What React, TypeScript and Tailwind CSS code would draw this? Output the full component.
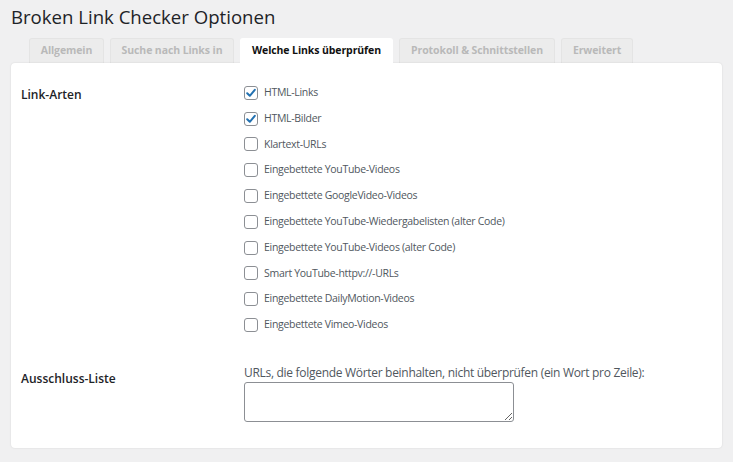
import React from "react";

const items: [string, boolean][] = [
  ["HTML-Links", true],
  ["HTML-Bilder", true],
  ["Klartext-URLs", false],
  ["Eingebettete YouTube-Videos", false],
  ["Eingebettete GoogleVideo-Videos", false],
  ["Eingebettete YouTube-Wiedergabelisten (alter Code)", false],
  ["Eingebettete YouTube-Videos (alter Code)", false],
  ["Smart YouTube-httpv://-URLs", false],
  ["Eingebettete DailyMotion-Videos", false],
  ["Eingebettete Vimeo-Videos", false],
];

const tabs: [string, number, boolean][] = [
  ["Allgemein", 75, false],
  ["Suche nach Links in", 124, false],
  ["Welche Links überprüfen", 153, true],
  ["Protokoll & Schnittstellen", 156, false],
  ["Erweitert", 72, false],
];

function Box({ checked }: { checked: boolean }) {
  return (
    <div className="w-[14px] h-[14px] rounded-[3px] border border-[#8c8f94] bg-white flex items-center justify-center shrink-0">
      {checked && (
        <svg width="12" height="12" viewBox="0 0 12 12">
          <path d="M2.2 6.2 L4.8 8.8 L9.8 2.8" fill="none" stroke="#2271b1" strokeWidth="2" strokeLinecap="round" strokeLinejoin="round" />
        </svg>
      )}
    </div>
  );
}

export default function App() {
  return (
    <div
      className="w-[733px] h-[462px] bg-[#f0f0f1] overflow-hidden"
      style={{ fontFamily: '"Open Sans", sans-serif' }}
    >
      <div className="pl-[11px] pt-[4px] h-[38px] text-[18.6px] leading-[26px] text-[#1d2327]">
        Broken Link Checker Optionen
      </div>
      <div className="flex pl-[29px] gap-[6px] h-[25px] items-end">
        {tabs.map(([t, w, active]) => (
          <div
            key={t}
            className={
              active
                ? "h-[26px] bg-white rounded-t-[3px] flex items-center justify-center text-[10.5px] tracking-[-0.1px] font-bold text-[#111] relative z-10 mb-[-1px]"
                : "h-[25px] bg-[#ececec] border border-b-0 border-[#e4e4e4] rounded-t-[3px] flex items-center justify-center text-[10.5px] tracking-[-0.1px] font-bold text-[#b9b9b9]"
            }
            style={{ width: w }}
          >
            {t}
          </div>
        ))}
      </div>
      <div className="mx-[11px] w-[711px] h-[385px] bg-white rounded-[4px] shadow-[0_0_2px_rgba(0,0,0,0.12)] relative">
        <div className="flex">
          <div className="w-[233px] pl-[10px] text-[12px] font-semibold text-[#1d2327] leading-[18px] pt-[23px]">
            Link-Arten
          </div>
          <div className="flex flex-col pt-[17px]">
            {items.map(([label, c]) => (
              <div key={label} className="flex items-center gap-[6px] h-[25.8px]">
                <Box checked={c} />
                <span className="text-[10.5px] text-[#50575e] tracking-[-0.3px]">{label}</span>
              </div>
            ))}
          </div>
        </div>
        <div className="flex mt-[27px]">
          <div className="w-[233px] pl-[10px] text-[12px] font-semibold text-[#1d2327] leading-[18px] pt-[5px]">
            Ausschluss-Liste
          </div>
          <div className="flex flex-col">
            <div className="text-[12px] leading-[16px] text-[#50575e] tracking-[-0.3px]">
              URLs, die folgende Wörter beinhalten, nicht überprüfen (ein Wort pro Zeile):
            </div>
            <textarea className="mt-[1px] w-[270px] h-[40px] border border-[#8c8f94] rounded-[3px] resize-y" />
          </div>
        </div>
      </div>
    </div>
  );
}
